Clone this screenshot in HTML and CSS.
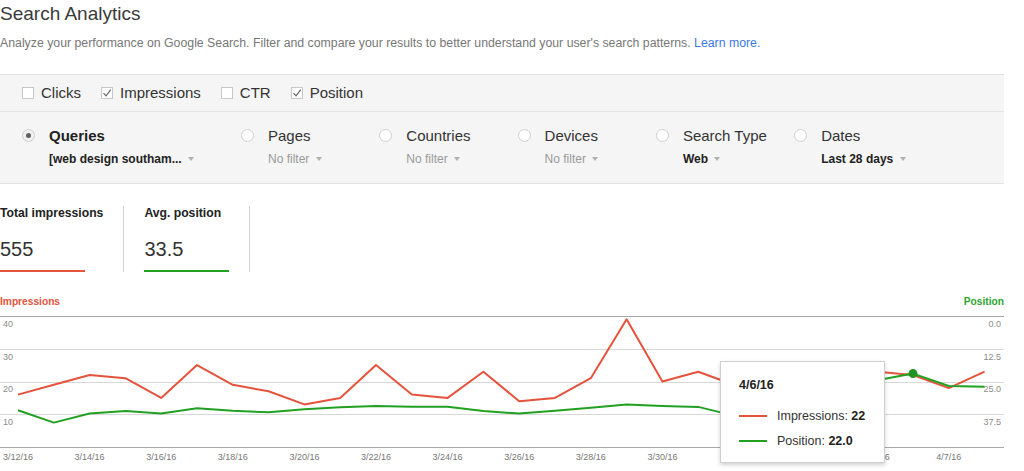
FILE: index.html
```html
<!DOCTYPE html>
<html>
<head>
<meta charset="utf-8">
<title>Search Analytics</title>
<link rel="stylesheet" href="styles.css">
</head>
<body>
<div class="page">
  <h1 class="title">Search Analytics</h1>
  <p class="subtitle">Analyze your performance on Google Search. Filter and compare your results to better understand your user's search patterns. <a href="#">Learn more.</a></p>

  <div class="controls">
    <div class="toggles">
      <label class="toggle"><span class="cb"></span>Clicks</label>
      <label class="toggle"><span class="cb"><svg viewBox="0 0 10 10" width="10" height="10"><path d="M1.5 5.2 L4 7.8 L8.8 1.6" fill="none" stroke="#666" stroke-width="1.2"/></svg></span>Impressions</label>
      <label class="toggle"><span class="cb"></span>CTR</label>
      <label class="toggle"><span class="cb"><svg viewBox="0 0 10 10" width="10" height="10"><path d="M1.5 5.2 L4 7.8 L8.8 1.6" fill="none" stroke="#666" stroke-width="1.2"/></svg></span>Position</label>
    </div>
    <div class="filters">
      <div class="filter wide">
        <span class="radio selected"></span>
        <div class="filter-text">
          <div class="filter-name active">Queries</div>
          <div class="filter-value strong">[web design southam... <span class="caret"></span></div>
        </div>
      </div>
      <div class="filter">
        <span class="radio"></span>
        <div class="filter-text">
          <div class="filter-name">Pages</div>
          <div class="filter-value">No filter <span class="caret"></span></div>
        </div>
      </div>
      <div class="filter">
        <span class="radio"></span>
        <div class="filter-text">
          <div class="filter-name">Countries</div>
          <div class="filter-value">No filter <span class="caret"></span></div>
        </div>
      </div>
      <div class="filter">
        <span class="radio"></span>
        <div class="filter-text">
          <div class="filter-name">Devices</div>
          <div class="filter-value">No filter <span class="caret"></span></div>
        </div>
      </div>
      <div class="filter">
        <span class="radio"></span>
        <div class="filter-text">
          <div class="filter-name">Search Type</div>
          <div class="filter-value strong">Web <span class="caret"></span></div>
        </div>
      </div>
      <div class="filter">
        <span class="radio"></span>
        <div class="filter-text">
          <div class="filter-name">Dates</div>
          <div class="filter-value strong">Last 28 days <span class="caret"></span></div>
        </div>
      </div>
    </div>
  </div>

  <div class="metrics">
    <div class="metric">
      <div class="metric-label">Total impressions</div>
      <div class="metric-value">555</div>
      <div class="metric-bar imp"></div>
    </div>
    <div class="metric">
      <div class="metric-label">Avg. position</div>
      <div class="metric-value">33.5</div>
      <div class="metric-bar pos"></div>
    </div>
  </div>

  <div class="chart-legend">
    <span class="legend-imp">Impressions</span>
    <span class="legend-pos">Position</span>
  </div>
  <div class="plot">
    <svg class="plot-svg" width="1004" height="161" viewBox="0 0 1004 161">
      <line class="grid-edge" x1="0" y1="6.5" x2="1004" y2="6.5"/>
      <line class="grid" x1="0" y1="39.5" x2="1004" y2="39.5"/>
      <line class="grid" x1="0" y1="72.5" x2="1004" y2="72.5"/>
      <line class="grid" x1="0" y1="104.5" x2="1004" y2="104.5"/>
      <line class="grid-edge" x1="0" y1="137.5" x2="1004" y2="137.5"/>

      <text class="axis" x="3" y="16.5">40</text>
      <text class="axis" x="3" y="49.5">30</text>
      <text class="axis" x="3" y="82">20</text>
      <text class="axis" x="3" y="114.5">10</text>

      <text class="axis" x="1001" y="16.5" text-anchor="end">0.0</text>
      <text class="axis" x="1001" y="49.5" text-anchor="end">12.5</text>
      <text class="axis" x="1001" y="82" text-anchor="end">25.0</text>
      <text class="axis" x="1001" y="114.5" text-anchor="end">37.5</text>

      <g class="xaxis" text-anchor="middle">
        <text x="18" y="150">3/12/16</text>
        <text x="89.6" y="150">3/14/16</text>
        <text x="161.2" y="150">3/16/16</text>
        <text x="232.8" y="150">3/18/16</text>
        <text x="304.4" y="150">3/20/16</text>
        <text x="376" y="150">3/22/16</text>
        <text x="447.6" y="150">3/24/16</text>
        <text x="519.2" y="150">3/26/16</text>
        <text x="590.8" y="150">3/28/16</text>
        <text x="662.4" y="150">3/30/16</text>
        <text x="734" y="150">4/1/16</text>
        <text x="805.6" y="150">4/3/16</text>
        <text x="877.2" y="150">4/5/16</text>
        <text x="948.8" y="150">4/7/16</text>
      </g>

      <polyline class="line-imp" points="18,84.6 53.8,74.8 89.6,65 125.4,68.2 161.2,87.9 197,55.1 232.8,74.8 268.6,81.3 304.4,94.4 340.2,87.9 376,55.1 411.8,84.6 447.6,87.9 483.4,61.7 519.2,91.2 555,87.9 590.8,68.2 626.6,9.3 662.4,71.5 698.2,61.7 734,74.8 769.8,78.1 805.6,71.5 841.4,68.2 877.2,61.7 913,65 948.8,78.1 984.6,61.7"/>
      <polyline class="line-pos" points="18,100.3 53.8,112.6 89.6,103.5 125.4,101.1 161.2,103.5 197,98.2 232.8,100.8 268.6,102.2 304.4,99.3 340.2,97.2 376,96.1 411.8,96.7 447.6,96.7 483.4,101.1 519.2,103.5 555,100.8 590.8,97.7 626.6,94.6 662.4,95.9 698.2,96.9 734,105.6 769.8,100.3 805.6,89.8 841.4,79.4 877.2,70.2 913,63.6 948.8,76 984.6,76.7"/>
      <circle class="dot" cx="913" cy="63.6" r="4.5"/>
    </svg>

    <div class="tooltip">
      <div class="tip-date">4/6/16</div>
      <div class="tip-row first"><span class="swatch imp"></span><span>Impressions: <b>22</b></span></div>
      <div class="tip-row"><span class="swatch pos"></span><span>Position: <b>22.0</b></span></div>
    </div>
  </div>
</div>
</body>
</html>
```

FILE: styles.css
```css
* { box-sizing: border-box; }

body {
  margin: 0;
  font-family: "Liberation Sans", Arial, sans-serif;
  background: #fff;
  color: #333;
}

.page { width: 1004px; }

.title {
  margin: 0;
  padding-top: 3px;
  font-size: 19px;
  line-height: 22px;
  font-weight: normal;
  color: #3a3a3a;
}

.subtitle {
  margin: 10px 0 0;
  font-size: 12.3px;
  line-height: 16px;
  color: #777;
}
.subtitle a { color: #3b78e7; text-decoration: none; }

.controls {
  margin-top: 23px;
  background: #f5f5f5;
  border-top: 1px solid #e2e2e2;
  border-bottom: 1px solid #e2e2e2;
}

.toggles {
  height: 37px;
  display: flex;
  align-items: center;
  gap: 20px;
  padding-left: 22px;
  border-bottom: 1px solid #e4e4e4;
  font-size: 15px;
  line-height: 18px;
  color: #333;
}
.toggle { display: flex; align-items: center; gap: 7px; }
.cb {
  width: 12px;
  height: 12px;
  border: 1px solid #c8c8c8;
  background: #fff;
  display: flex;
  align-items: center;
  justify-content: center;
}
.cb svg { display: block; }

.filters {
  display: flex;
  padding: 15px 0 16px 22px;
}
.filter { display: flex; gap: 14px; width: 138.3px; }
.filter.wide { width: 219px; }
.radio {
  flex: none;
  width: 13px;
  height: 13px;
  margin-top: 2px;
  border: 1px solid #cfcfcf;
  border-radius: 50%;
  background: #fff;
  display: flex;
  align-items: center;
  justify-content: center;
}
.radio.selected { background: #f0f0f0; }
.radio.selected::after {
  content: "";
  width: 5px;
  height: 5px;
  border-radius: 50%;
  background: #606060;
}
.filter-name {
  font-size: 15px;
  line-height: 18px;
  color: #333;
  white-space: nowrap;
}
.filter-name.active { font-weight: bold; color: #222; }
.filter-value {
  margin-top: 6px;
  font-size: 12px;
  line-height: 16px;
  color: #9a9a9a;
  white-space: nowrap;
}
.filter-value.strong { font-weight: bold; color: #222; }
.caret {
  display: inline-block;
  vertical-align: middle;
  margin-left: 3px;
  margin-top: -2px;
  border-left: 3.5px solid transparent;
  border-right: 3.5px solid transparent;
  border-top: 4px solid #b0b0b0;
}

.metrics {
  margin-top: 22px;
  display: flex;
}
.metric {
  padding: 0 20px;
  border-right: 1px solid #d4d4d4;
}
.metric:first-child { padding-left: 0; }
.metric-label {
  font-size: 12.2px;
  line-height: 14px;
  font-weight: bold;
  color: #222;
}
.metric-value {
  margin-top: 17px;
  font-size: 20px;
  line-height: 24px;
  color: #333;
}
.metric-bar { margin-top: 9px; width: 85px; height: 2px; }
.metric-bar.imp { background: #e5533d; }
.metric-bar.pos { background: #22a022; }

.chart-legend {
  margin-top: 24px;
  display: flex;
  justify-content: space-between;
  font-size: 10.2px;
  line-height: 12px;
  font-weight: bold;
}
.legend-imp { color: #e5533d; }
.legend-pos { color: #2ea52e; }

.plot {
  position: relative;
  margin-top: 2px;
  height: 161px;
}
.plot-svg { display: block; }
.grid { stroke: #d8d8d8; stroke-width: 1; }
.grid-edge { stroke: #a8a8a8; stroke-width: 1; }
.axis { font-family: "Liberation Sans", Arial, sans-serif; font-size: 9px; fill: #8a8a8a; }
.xaxis { font-family: "Liberation Sans", Arial, sans-serif; font-size: 9px; fill: #777; }
.line-imp { fill: none; stroke: #e5533d; stroke-width: 2; stroke-linejoin: round; }
.line-pos { fill: none; stroke: #22a022; stroke-width: 2; stroke-linejoin: round; }
.dot { fill: #1e951e; }

.tooltip {
  position: absolute;
  left: 720px;
  top: 51px;
  width: 165px;
  height: 102px;
  background: #fff;
  border: 1px solid #cfcfcf;
  box-shadow: 0 2px 4px rgba(0, 0, 0, 0.18);
  padding: 16px 0 0 18px;
  font-size: 12.5px;
  line-height: 15px;
  color: #333;
}
.tip-date { font-weight: bold; color: #222; }
.tip-row { display: flex; align-items: center; gap: 10px; margin-top: 10px; }
.tip-row.first { margin-top: 15.5px; }
.tip-row b { color: #222; }
.swatch { width: 28px; height: 2px; }
.swatch.imp { background: #e5533d; }
.swatch.pos { background: #22a022; }
```
